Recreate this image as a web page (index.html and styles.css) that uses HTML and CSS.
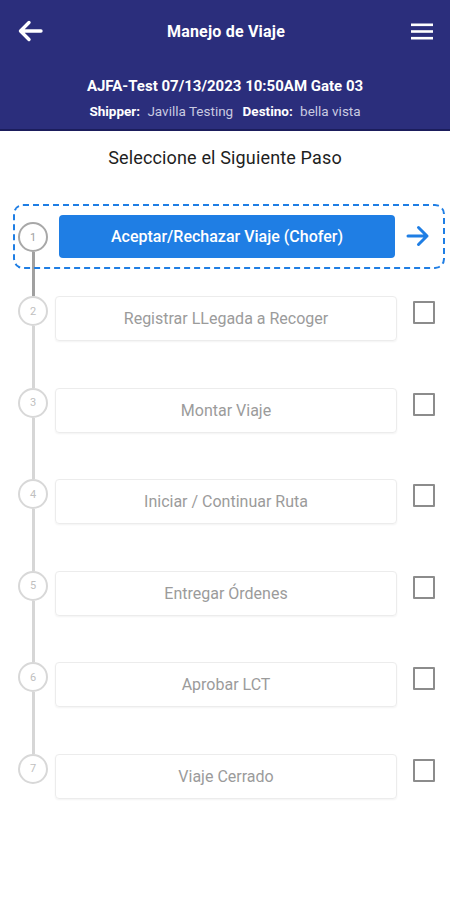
FILE: index.html
```html
<!DOCTYPE html>
<html lang="es">
<head>
<meta charset="utf-8">
<title>Manejo de Viaje</title>
<link rel="stylesheet" href="styles.css">
</head>
<body>
<header class="header">
  <div class="topbar">
    <button class="icon-btn back" aria-label="Atrás">
      <svg width="26" height="24" viewBox="0 0 26 24"><path d="M24 12H4M12 3.5L3.5 12 12 20.5" fill="none" stroke="#fff" stroke-width="3.4" stroke-linecap="round" stroke-linejoin="round"/></svg>
    </button>
    <h1 class="title">Manejo de Viaje</h1>
    <button class="icon-btn menu" aria-label="Menú">
      <svg width="24" height="20" viewBox="0 0 24 20"><rect x="1" y="2.5" width="22" height="2.6" fill="#fff"/><rect x="1" y="9.2" width="22" height="2.6" fill="#fff"/><rect x="1" y="15.9" width="22" height="2.6" fill="#fff"/></svg>
    </button>
  </div>
  <div class="trip">
    <div class="trip-name">AJFA-Test 07/13/2023 10:50AM Gate 03</div>
    <div class="trip-meta"><b>Shipper:</b> <span class="val">Javilla Testing</span> <b class="dest">Destino:</b> <span class="val">bella vista</span></div>
  </div>
</header>

<main class="content">
  <h2 class="subtitle">Seleccione el Siguiente Paso</h2>
  <ol class="steps">
    <li class="step active">
      <div class="rail"><span class="dot">1</span><span class="line"></span></div>
      <button class="primary">Aceptar/Rechazar Viaje (Chofer)</button>
      <svg class="go" width="24" height="22" viewBox="0 0 24 22"><path d="M2 11H21M12.5 2.5L21 11 12.5 19.5" fill="none" stroke="#1f7ee4" stroke-width="3" stroke-linecap="round" stroke-linejoin="round"/></svg>
    </li>
    <li class="step">
      <div class="rail"><span class="dot">2</span><span class="line"></span></div>
      <div class="card">Registrar LLegada a Recoger</div>
      <span class="check"></span>
    </li>
    <li class="step">
      <div class="rail"><span class="dot">3</span><span class="line"></span></div>
      <div class="card">Montar Viaje</div>
      <span class="check"></span>
    </li>
    <li class="step">
      <div class="rail"><span class="dot">4</span><span class="line"></span></div>
      <div class="card">Iniciar / Continuar Ruta</div>
      <span class="check"></span>
    </li>
    <li class="step">
      <div class="rail"><span class="dot">5</span><span class="line"></span></div>
      <div class="card">Entregar Órdenes</div>
      <span class="check"></span>
    </li>
    <li class="step">
      <div class="rail"><span class="dot">6</span><span class="line"></span></div>
      <div class="card">Aprobar LCT</div>
      <span class="check"></span>
    </li>
    <li class="step last">
      <div class="rail"><span class="dot">7</span></div>
      <div class="card">Viaje Cerrado</div>
      <span class="check"></span>
    </li>
  </ol>
</main>
</body>
</html>
```

FILE: styles.css
```css
* { box-sizing: border-box; }
html, body { margin: 0; padding: 0; }
body {
  width: 450px;
  min-height: 900px;
  background: #fff;
  font-family: Roboto, "Noto Sans", "Liberation Sans", sans-serif;
  color: #222;
}

.header {
  background: #2b2e7c;
  border-bottom: 2px solid #1b1d5c;
  height: 131px;
  color: #fff;
}
.topbar {
  height: 62px;
  display: flex;
  align-items: center;
  justify-content: space-between;
  padding: 0 14px 0 16px;
}
.icon-btn {
  background: none;
  border: 0;
  padding: 0;
  width: 28px;
  height: 28px;
  display: flex;
  align-items: center;
  justify-content: center;
}
.title {
  margin: 0;
  font-size: 16px;
  font-weight: 700;
  letter-spacing: 0.2px;
}
.trip {
  text-align: center;
  padding-top: 14px;
}
.trip-name {
  font-size: 15px;
  font-weight: 700;
  line-height: 20px;
}
.trip-meta {
  margin-top: 6px;
  font-size: 13.5px;
  line-height: 18px;
}
.trip-meta b { font-weight: 700; }
.trip-meta .val { color: #c9cae0; margin-left: 4px; }
.trip-meta .dest { margin-left: 6px; }

.content { padding-top: 16px; }
.subtitle {
  margin: 0;
  text-align: center;
  font-size: 18px;
  font-weight: 400;
  letter-spacing: 0.15px;
  line-height: 22px;
  color: #1e1e1e;
}

.steps {
  list-style: none;
  margin: 0;
  padding: 46px 15px 0 18px;
}
.step {
  display: flex;
  align-items: flex-start;
}
.rail {
  width: 30px;
  align-self: stretch;
  display: flex;
  flex-direction: column;
  align-items: center;
  flex-shrink: 0;
}
.dot {
  width: 30px;
  height: 30px;
  border: 2px solid #d8d8d8;
  border-radius: 50%;
  display: flex;
  align-items: center;
  justify-content: center;
  font-size: 11px;
  color: #c0c0c0;
  background: #fff;
  flex-shrink: 0;
}
.line {
  flex: 1;
  width: 3px;
  background: #d6d6d6;
}

.card {
  flex: 1;
  height: 45px;
  margin: 0 0 46.6px 7px;
  border: 1px solid #ececec;
  border-radius: 4px;
  box-shadow: 0 1px 2px rgba(0,0,0,0.05);
  display: flex;
  align-items: center;
  justify-content: center;
  font-size: 16px;
  color: #9b9b9b;
}
.check {
  width: 22px;
  height: 23px;
  margin: 5px 0 0 16px;
  border: 2px solid #8c8c8c;
  border-radius: 1px;
  flex-shrink: 0;
}
.last .card { margin-bottom: 0; }

.step.active { position: relative; }
.step.active::before {
  content: "";
  position: absolute;
  left: -5px;
  right: -10px;
  top: -11px;
  bottom: 27px;
  border: 2.5px dashed #1f7ee4;
  border-radius: 10px;
  pointer-events: none;
}
.active .dot {
  margin-top: 7px;
  border-color: #a8a8a8;
  color: #a0a0a0;
}
.active .line { background: #a0a0a0; }
.primary {
  flex: 1;
  height: 43px;
  margin: 0 0 38px 11px;
  border: 0;
  border-radius: 4px;
  background: #1f7ee4;
  color: #fff;
  font-family: inherit;
  font-size: 16px;
  font-weight: 500;
}
.go {
  margin: 10px 5px 0 11px;
  flex-shrink: 0;
}
```
